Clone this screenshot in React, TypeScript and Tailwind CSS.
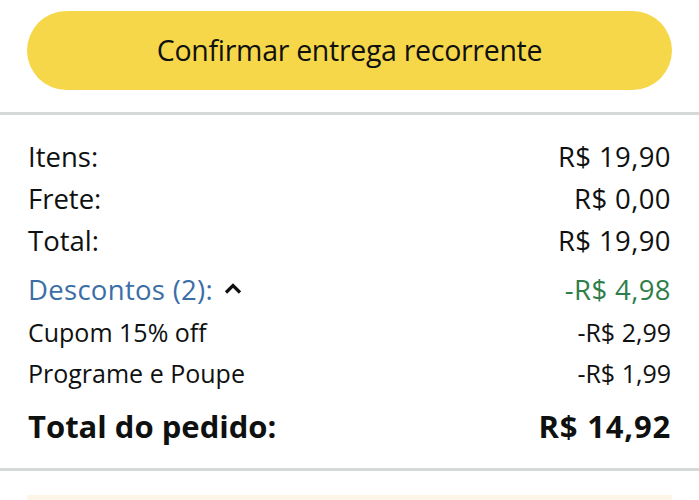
import React from "react";

interface Line {
  label: string;
  value: string;
}

const summary: Line[] = [
  { label: "Itens:", value: "R$ 19,90" },
  { label: "Frete:", value: "R$ 0,00" },
  { label: "Total:", value: "R$ 19,90" },
];

const discounts: Line[] = [
  { label: "Cupom 15% off", value: "-R$ 2,99" },
  { label: "Programe e Poupe", value: "-R$ 1,99" },
];

export default function App() {
  return (
    <div
      className="w-[699px] h-[500px] overflow-hidden bg-white text-[#0f1111]"
      style={{ fontFamily: '"Open Sans", "Noto Sans", sans-serif' }}
    >
      <div className="px-[27px] pt-[11px] pb-[22px]">
        <button className="w-full h-[79px] rounded-full bg-[#f7d74a] text-[28.5px] text-[#0f1111] flex items-center justify-center tracking-[-0.3px]">
          Confirmar entrega recorrente
        </button>
      </div>

      <div className="h-[3px] bg-[#d5d9d9]" />

      <div className="px-[28px] pt-[21px] pb-[18px]">
        {summary.map((row) => (
          <div key={row.label} className="flex justify-between items-center h-[42px] text-[27.5px]">
            <span>{row.label}</span>
            <span className="tracking-[0.4px]">{row.value}</span>
          </div>
        ))}

        <div className="flex justify-between items-center h-[50px] text-[27.5px] pt-[6px]">
          <button className="flex items-center gap-[11px] text-[#3b6ea6]">
            <span className="tracking-[0.3px]">Descontos (2):</span>
            <svg className="shrink-0 mb-[4px]" width="18" height="13" viewBox="0 0 18 13" fill="none">
              <path d="M2 10.5 L9 3.5 L16 10.5" stroke="#0f1111" strokeWidth="3.2" />
            </svg>
          </button>
          <span className="text-[#2f7d4a] tracking-[0.4px]">-R$ 4,98</span>
        </div>

        {discounts.map((row) => (
          <div key={row.label} className="flex justify-between items-center h-[41px] text-[25px]">
            <span>{row.label}</span>
            <span>{row.value}</span>
          </div>
        ))}

        <div className="flex justify-between items-center h-[56px] pt-[8px] text-[31px] font-bold">
          <span>Total do pedido:</span>
          <span className="tracking-[0.8px]">R$ 14,92</span>
        </div>
      </div>

      <div className="h-[3px] bg-[#d5d9d9]" />

      <div className="px-[27px] pt-[24px]">
        <div className="h-[40px] bg-[#fdf6e6]" />
      </div>
    </div>
  );
}
